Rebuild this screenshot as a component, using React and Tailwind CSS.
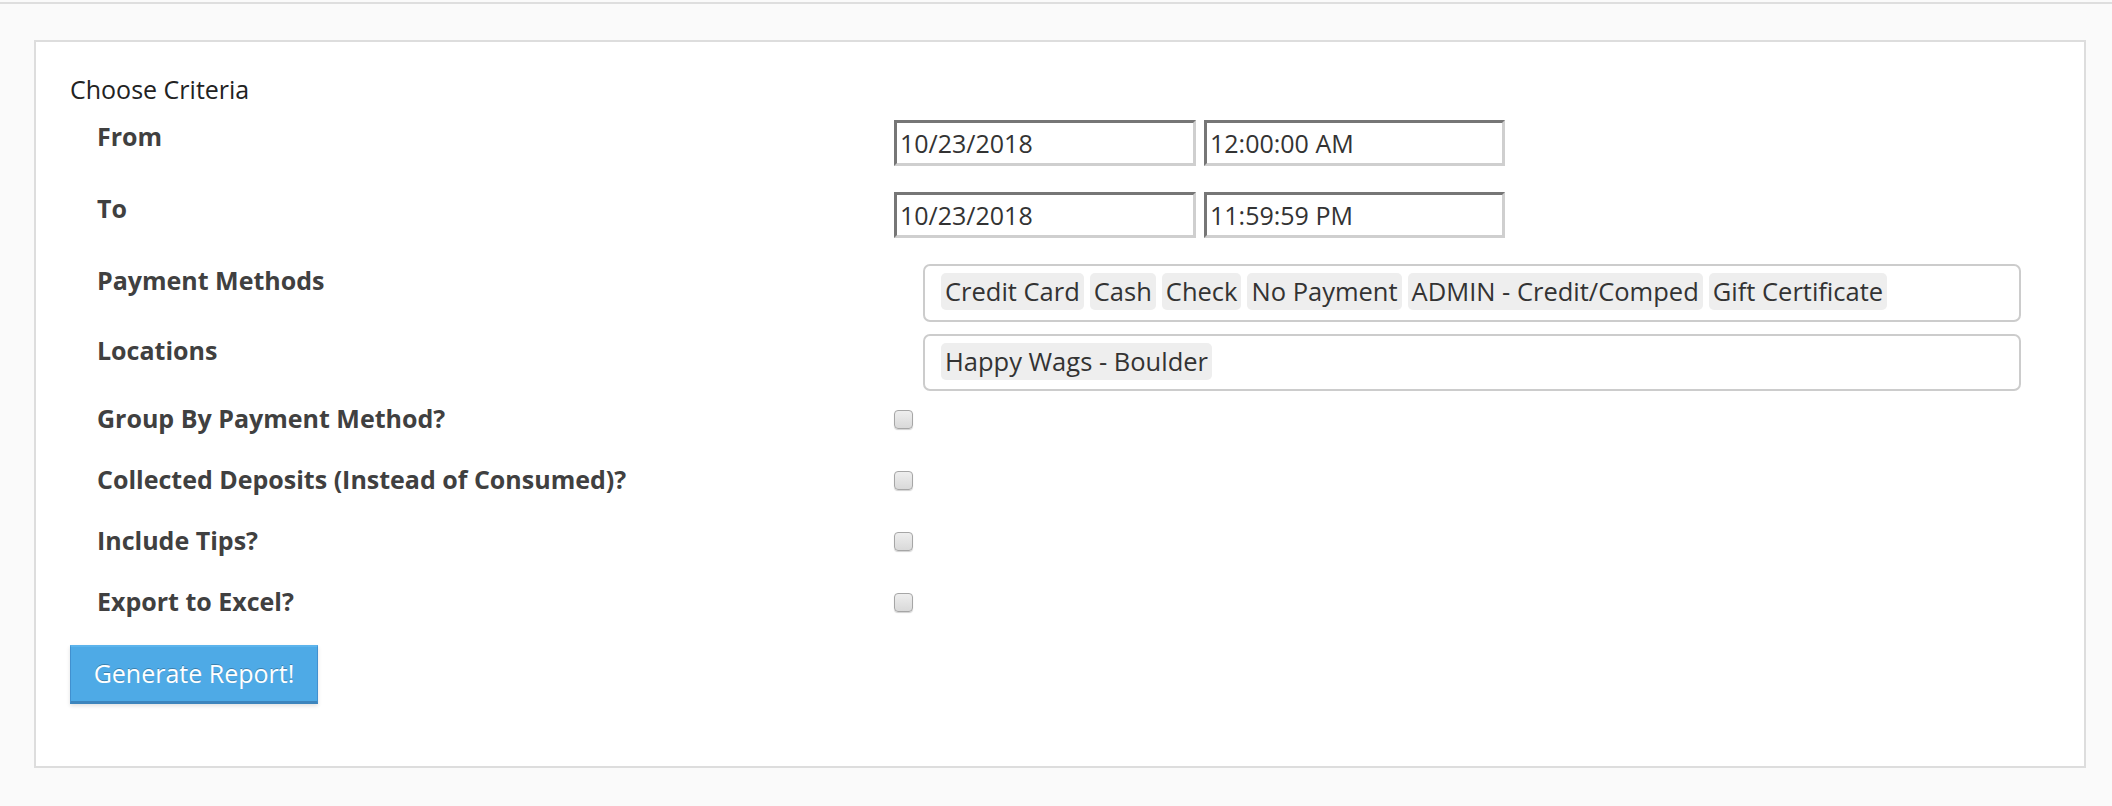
import React from "react";

function DateInput({ value, w }) {
  return (
    <div
      className={`${w} h-[46px] border-[3px] border-t-[#767676] border-l-[#767676] border-b-[#cfcfcf] border-r-[#cfcfcf] bg-white flex items-center pl-[3px] text-[25px] text-[#333] leading-none`}
    >
      {value}
    </div>
  );
}

function Tag({ children }) {
  return (
    <span className="h-[37px] px-[4px] rounded-[5px] bg-[#eeeeee] text-[25.5px] leading-[37px] text-[#333] whitespace-nowrap">
      {children}
    </span>
  );
}

function Label({ children }) {
  return (
    <div className="w-[797px] shrink-0 text-[25px] leading-[32px] font-bold text-[#404040]">
      {children}
    </div>
  );
}

function CheckRow({ label, first }) {
  return (
    <div className={`flex items-start h-[32px] ${first ? "mt-[11px]" : "mt-[29px]"}`}>
      <Label>{label}</Label>
      <input
        type="checkbox"
        className="appearance-none mt-[8px] w-[19px] h-[19px] rounded-[4px] border border-[#a6a6a6] bg-gradient-to-b from-[#eeeeee] to-[#d9d9d9] shadow-[0_1px_1px_rgba(0,0,0,0.18)]"
      />
    </div>
  );
}

export default function App() {
  return (
    <div className="min-h-[806px] bg-[#fafafa] pt-[2px] font-['Open_Sans',sans-serif]">
      <div className="h-[2px] bg-[#dedede]" />
      <div className="ml-[34px] mt-[36px] w-[2052px] h-[728px] border-2 border-[#dddddd] bg-white pt-[30px] pl-[34px]">
        <div className="text-[25px] leading-[34px] text-[#222]">Choose Criteria</div>
        <div className="pl-[27px]">
          <div className="flex items-start mt-[14px]">
            <Label>From</Label>
            <div className="flex gap-[8px]">
              <DateInput value="10/23/2018" w="w-[302px]" />
              <DateInput value="12:00:00 AM" w="w-[301px]" />
            </div>
          </div>
          <div className="flex items-start mt-[26px]">
            <Label>To</Label>
            <div className="flex gap-[8px]">
              <DateInput value="10/23/2018" w="w-[302px]" />
              <DateInput value="11:59:59 PM" w="w-[301px]" />
            </div>
          </div>
          <div className="flex items-start mt-[26px]">
            <Label>Payment Methods</Label>
            <div className="ml-[29px] w-[1098px] h-[58px] border-2 border-[#cccccc] rounded-[7px] px-[16px] pt-[7px] flex gap-[6px] items-start">
              <Tag>Credit Card</Tag>
              <Tag>Cash</Tag>
              <Tag>Check</Tag>
              <Tag>No Payment</Tag>
              <Tag>ADMIN - Credit/Comped</Tag>
              <Tag>Gift Certificate</Tag>
            </div>
          </div>
          <div className="flex items-start mt-[12px]">
            <Label>Locations</Label>
            <div className="ml-[29px] w-[1098px] h-[57px] border-2 border-[#cccccc] rounded-[7px] px-[16px] pt-[7px] flex gap-[6px] items-start">
              <Tag>Happy Wags - Boulder</Tag>
            </div>
          </div>
          <CheckRow label="Group By Payment Method?" first />
          <CheckRow label="Collected Deposits (Instead of Consumed)?" />
          <CheckRow label="Include Tips?" />
          <CheckRow label="Export to Excel?" />
        </div>
        <button className="mt-[28px] w-[248px] h-[59px] bg-[#4eaae6] border-x border-t-2 border-b-[3px] border-x-[#4190cf] border-t-[#5cb4ec] border-b-[#3d85bd] text-white text-[25px] [text-shadow:0_-1px_0_rgba(0,0,0,0.25)] shadow-[0_2px_4px_rgba(0,0,0,0.12)]">
          Generate Report!
        </button>
      </div>
    </div>
  );
}
